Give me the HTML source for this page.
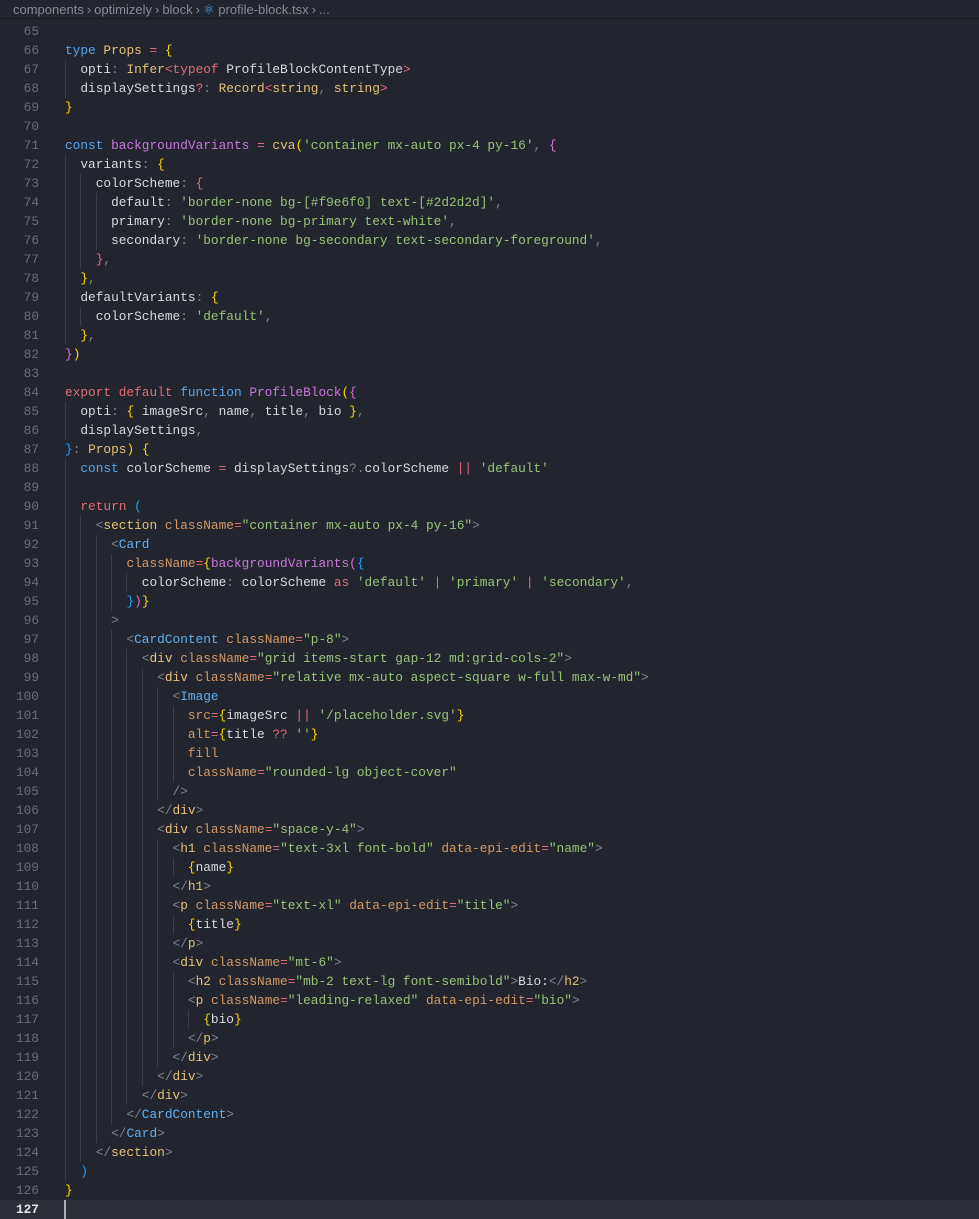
<!DOCTYPE html>
<html><head><meta charset="utf-8"><style>
body{margin:0;background:#23252e;width:979px;height:1215px;overflow:hidden;position:relative;font-family:"Liberation Mono",monospace;}
#bc{position:absolute;left:0;top:0;width:979px;height:19px;border-bottom:1px solid #16181d;font-family:"Liberation Sans",sans-serif;font-size:13px;color:#878b94;line-height:19px;padding-left:13px;box-sizing:border-box;white-space:pre}
#bc i{font-style:normal;margin:0 3px}
#code{position:absolute;left:0;top:22px;width:979px}
.l{position:relative;height:19px;line-height:19px;font-size:12.8px;white-space:pre;color:#d7dae0}
.n{position:absolute;left:0;width:39px;text-align:right;color:#686d78}
.c{position:absolute;left:65px}
.cur{background:#2c2f38}
.cur .n{color:#e6e6e6}
.g{position:absolute;width:1px;background:#3a3d46}
.k{color:#56a6ef}.t{color:#e5c07b}.r{color:#e06c75}.p{color:#c678dd}.s{color:#98c379}.a{color:#d19a66}.u{color:#7f848e}.y{color:#ffd700}.v{color:#da70d6}.b{color:#179fff}.j{color:#61afef}.o{color:#e0a86a}
</style></head><body>
<div id="bc">components<i>&#x203A;</i>optimizely<i>&#x203A;</i>block<i>&#x203A;</i><span style="color:#4aa8e8">&#x269B;</span> profile-block.tsx<i>&#x203A;</i>...</div>
<div id="code">
<div class="l"><span class="n">65</span><span class="c"></span></div>
<div class="l"><span class="n">66</span><span class="c"><span class="k">type</span> <span class="t">Props</span> <span class="r">=</span> <span class="y">{</span></span></div>
<div class="l"><span class="n">67</span><span class="c">  opti<span class="u">:</span> <span class="t">Infer</span><span class="r">&lt;typeof</span> ProfileBlockContentType<span class="r">&gt;</span></span></div>
<div class="l"><span class="n">68</span><span class="c">  displaySettings<span class="r">?</span><span class="u">:</span> <span class="t">Record</span><span class="r">&lt;</span><span class="t">string</span><span class="u">,</span> <span class="t">string</span><span class="r">&gt;</span></span></div>
<div class="l"><span class="n">69</span><span class="c"><span class="y">}</span></span></div>
<div class="l"><span class="n">70</span><span class="c"></span></div>
<div class="l"><span class="n">71</span><span class="c"><span class="k">const</span> <span class="p">backgroundVariants</span> <span class="r">=</span> <span class="t">cva</span><span class="y">(</span><span class="s">'container mx-auto px-4 py-16'</span><span class="u">,</span> <span class="v">{</span></span></div>
<div class="l"><span class="n">72</span><span class="c">  variants<span class="u">:</span> <span class="y">{</span></span></div>
<div class="l"><span class="n">73</span><span class="c">    colorScheme<span class="u">:</span> <span class="r">{</span></span></div>
<div class="l"><span class="n">74</span><span class="c">      default<span class="u">:</span> <span class="s">'border-none bg-[#f9e6f0] text-[#2d2d2d]'</span><span class="u">,</span></span></div>
<div class="l"><span class="n">75</span><span class="c">      primary<span class="u">:</span> <span class="s">'border-none bg-primary text-white'</span><span class="u">,</span></span></div>
<div class="l"><span class="n">76</span><span class="c">      secondary<span class="u">:</span> <span class="s">'border-none bg-secondary text-secondary-foreground'</span><span class="u">,</span></span></div>
<div class="l"><span class="n">77</span><span class="c">    <span class="r">}</span><span class="u">,</span></span></div>
<div class="l"><span class="n">78</span><span class="c">  <span class="y">}</span><span class="u">,</span></span></div>
<div class="l"><span class="n">79</span><span class="c">  defaultVariants<span class="u">:</span> <span class="y">{</span></span></div>
<div class="l"><span class="n">80</span><span class="c">    colorScheme<span class="u">:</span> <span class="s">'default'</span><span class="u">,</span></span></div>
<div class="l"><span class="n">81</span><span class="c">  <span class="y">}</span><span class="u">,</span></span></div>
<div class="l"><span class="n">82</span><span class="c"><span class="v">}</span><span class="y">)</span></span></div>
<div class="l"><span class="n">83</span><span class="c"></span></div>
<div class="l"><span class="n">84</span><span class="c"><span class="r">export default</span> <span class="k">function</span> <span class="p">ProfileBlock</span><span class="y">(</span><span class="v">{</span></span></div>
<div class="l"><span class="n">85</span><span class="c">  opti<span class="u">:</span> <span class="y">{</span> imageSrc<span class="u">,</span> name<span class="u">,</span> title<span class="u">,</span> bio <span class="y">}</span><span class="u">,</span></span></div>
<div class="l"><span class="n">86</span><span class="c">  displaySettings<span class="u">,</span></span></div>
<div class="l"><span class="n">87</span><span class="c"><span class="b">}</span><span class="u">:</span> <span class="t">Props</span><span class="y">)</span> <span class="y">{</span></span></div>
<div class="l"><span class="n">88</span><span class="c">  <span class="k">const</span> colorScheme <span class="r">=</span> displaySettings<span class="u">?.</span>colorScheme <span class="r">||</span> <span class="s">'default'</span></span></div>
<div class="l"><span class="n">89</span><span class="c"></span></div>
<div class="l"><span class="n">90</span><span class="c">  <span class="r">return</span> <span class="b">(</span></span></div>
<div class="l"><span class="n">91</span><span class="c">    <span class="u">&lt;</span><span class="t">section</span> <span class="a">className</span><span class="r">=</span><span class="s">"container mx-auto px-4 py-16"</span><span class="u">&gt;</span></span></div>
<div class="l"><span class="n">92</span><span class="c">      <span class="u">&lt;</span><span class="j">Card</span></span></div>
<div class="l"><span class="n">93</span><span class="c">        <span class="a">className</span><span class="r">=</span><span class="y">{</span><span class="p">backgroundVariants</span><span class="v">(</span><span class="b">{</span></span></div>
<div class="l"><span class="n">94</span><span class="c">          colorScheme<span class="u">:</span> colorScheme <span class="r">as</span> <span class="s">'default'</span> <span class="r">|</span> <span class="s">'primary'</span> <span class="r">|</span> <span class="s">'secondary'</span><span class="u">,</span></span></div>
<div class="l"><span class="n">95</span><span class="c">        <span class="b">}</span><span class="v">)</span><span class="y">}</span></span></div>
<div class="l"><span class="n">96</span><span class="c">      <span class="u">&gt;</span></span></div>
<div class="l"><span class="n">97</span><span class="c">        <span class="u">&lt;</span><span class="j">CardContent</span> <span class="a">className</span><span class="r">=</span><span class="s">"p-8"</span><span class="u">&gt;</span></span></div>
<div class="l"><span class="n">98</span><span class="c">          <span class="u">&lt;</span><span class="t">div</span> <span class="a">className</span><span class="r">=</span><span class="s">"grid items-start gap-12 md:grid-cols-2"</span><span class="u">&gt;</span></span></div>
<div class="l"><span class="n">99</span><span class="c">            <span class="u">&lt;</span><span class="t">div</span> <span class="a">className</span><span class="r">=</span><span class="s">"relative mx-auto aspect-square w-full max-w-md"</span><span class="u">&gt;</span></span></div>
<div class="l"><span class="n">100</span><span class="c">              <span class="u">&lt;</span><span class="j">Image</span></span></div>
<div class="l"><span class="n">101</span><span class="c">                <span class="a">src</span><span class="r">=</span><span class="y">{</span>imageSrc <span class="r">||</span> <span class="s">'/placeholder.svg'</span><span class="y">}</span></span></div>
<div class="l"><span class="n">102</span><span class="c">                <span class="a">alt</span><span class="r">=</span><span class="y">{</span>title <span class="r">??</span> <span class="s">''</span><span class="y">}</span></span></div>
<div class="l"><span class="n">103</span><span class="c">                <span class="a">fill</span></span></div>
<div class="l"><span class="n">104</span><span class="c">                <span class="a">className</span><span class="r">=</span><span class="s">"rounded-lg object-cover"</span></span></div>
<div class="l"><span class="n">105</span><span class="c">              <span class="u">/&gt;</span></span></div>
<div class="l"><span class="n">106</span><span class="c">            <span class="u">&lt;/</span><span class="t">div</span><span class="u">&gt;</span></span></div>
<div class="l"><span class="n">107</span><span class="c">            <span class="u">&lt;</span><span class="t">div</span> <span class="a">className</span><span class="r">=</span><span class="s">"space-y-4"</span><span class="u">&gt;</span></span></div>
<div class="l"><span class="n">108</span><span class="c">              <span class="u">&lt;</span><span class="t">h1</span> <span class="a">className</span><span class="r">=</span><span class="s">"text-3xl font-bold"</span> <span class="a">data-epi-edit</span><span class="r">=</span><span class="s">"name"</span><span class="u">&gt;</span></span></div>
<div class="l"><span class="n">109</span><span class="c">                <span class="y">{</span>name<span class="y">}</span></span></div>
<div class="l"><span class="n">110</span><span class="c">              <span class="u">&lt;/</span><span class="t">h1</span><span class="u">&gt;</span></span></div>
<div class="l"><span class="n">111</span><span class="c">              <span class="u">&lt;</span><span class="t">p</span> <span class="a">className</span><span class="r">=</span><span class="s">"text-xl"</span> <span class="a">data-epi-edit</span><span class="r">=</span><span class="s">"title"</span><span class="u">&gt;</span></span></div>
<div class="l"><span class="n">112</span><span class="c">                <span class="y">{</span>title<span class="y">}</span></span></div>
<div class="l"><span class="n">113</span><span class="c">              <span class="u">&lt;/</span><span class="t">p</span><span class="u">&gt;</span></span></div>
<div class="l"><span class="n">114</span><span class="c">              <span class="u">&lt;</span><span class="t">div</span> <span class="a">className</span><span class="r">=</span><span class="s">"mt-6"</span><span class="u">&gt;</span></span></div>
<div class="l"><span class="n">115</span><span class="c">                <span class="u">&lt;</span><span class="t">h2</span> <span class="a">className</span><span class="r">=</span><span class="s">"mb-2 text-lg font-semibold"</span><span class="u">&gt;</span>Bio:<span class="u">&lt;/</span><span class="t">h2</span><span class="u">&gt;</span></span></div>
<div class="l"><span class="n">116</span><span class="c">                <span class="u">&lt;</span><span class="t">p</span> <span class="a">className</span><span class="r">=</span><span class="s">"leading-relaxed"</span> <span class="a">data-epi-edit</span><span class="r">=</span><span class="s">"bio"</span><span class="u">&gt;</span></span></div>
<div class="l"><span class="n">117</span><span class="c">                  <span class="y">{</span>bio<span class="y">}</span></span></div>
<div class="l"><span class="n">118</span><span class="c">                <span class="u">&lt;/</span><span class="t">p</span><span class="u">&gt;</span></span></div>
<div class="l"><span class="n">119</span><span class="c">              <span class="u">&lt;/</span><span class="t">div</span><span class="u">&gt;</span></span></div>
<div class="l"><span class="n">120</span><span class="c">            <span class="u">&lt;/</span><span class="t">div</span><span class="u">&gt;</span></span></div>
<div class="l"><span class="n">121</span><span class="c">          <span class="u">&lt;/</span><span class="t">div</span><span class="u">&gt;</span></span></div>
<div class="l"><span class="n">122</span><span class="c">        <span class="u">&lt;/</span><span class="j">CardContent</span><span class="u">&gt;</span></span></div>
<div class="l"><span class="n">123</span><span class="c">      <span class="u">&lt;/</span><span class="j">Card</span><span class="u">&gt;</span></span></div>
<div class="l"><span class="n">124</span><span class="c">    <span class="u">&lt;/</span><span class="t">section</span><span class="u">&gt;</span></span></div>
<div class="l"><span class="n">125</span><span class="c">  <span class="b">)</span></span></div>
<div class="l"><span class="n">126</span><span class="c"><span class="y">}</span></span></div>
<div class="l cur"><span class="n" style="font-weight:bold">127</span><span class="c" style="border-left:2px solid #aeafad;height:19px;left:64px"></span></div>
</div>
<div id="guides"></div>
<script>
var G=[[67,68,0],[72,81,0],[73,77,1],[74,76,2],[80,80,1],[85,86,0],[88,125,0],[91,124,1],[92,123,2],[93,95,3],[94,94,4],[97,122,3],[98,121,4],[99,120,5],[100,105,6],[101,104,7],[108,119,6],[109,109,7],[112,112,7],[115,118,7],[117,117,8]];
var h='';G.forEach(function(g){var top=22+(g[0]-65)*19,ht=(g[1]-g[0]+1)*19,x=65+g[2]*15.36;h+='<div class="g" style="left:'+Math.round(x)+'px;top:'+top+'px;height:'+ht+'px"></div>';});
document.getElementById('guides').innerHTML=h;
</script>
</body></html>
